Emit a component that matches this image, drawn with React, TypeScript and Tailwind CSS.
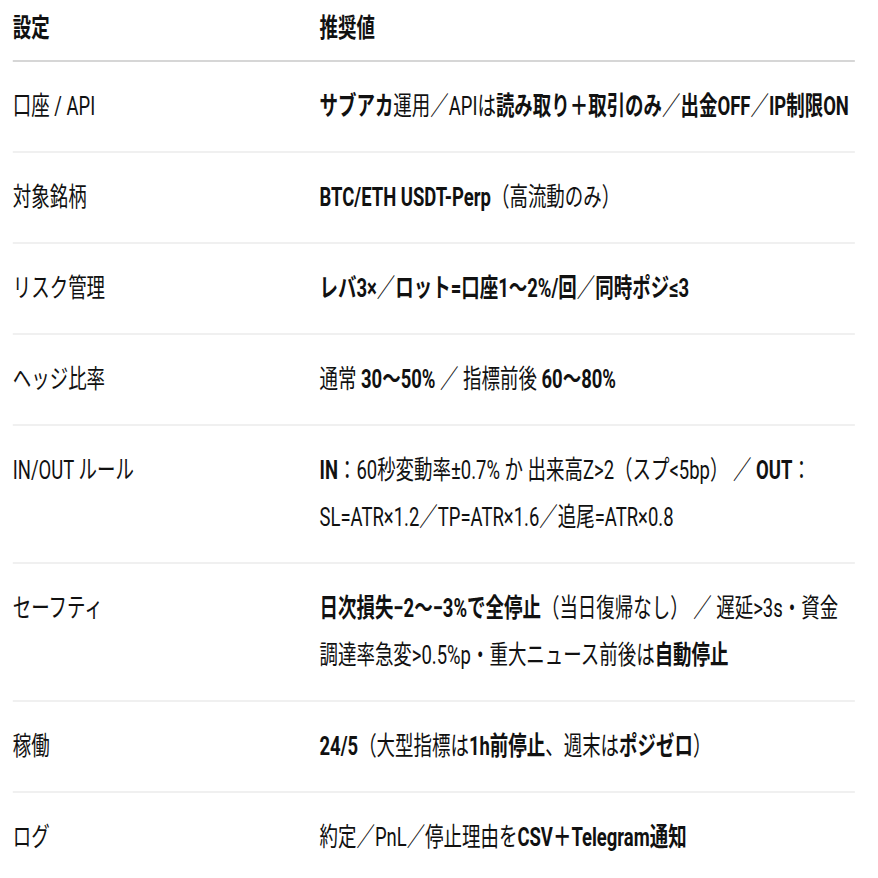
import type { ReactNode } from "react";

/**
 * 設定 / 推奨値 の表
 * 参照画像は横方向に圧縮されているので、表全体を scale-x で縮める
 */

type Row = { label: string; value: ReactNode };

const B = ({ children }: { children: ReactNode }) => (
  <span className="font-bold">{children}</span>
);

const rows: Row[] = [
  {
    label: "口座 / API",
    value: (
      <>
        <B>サブアカ</B>運用／APIは<B>読み取り＋取引のみ</B>／<B>出金OFF</B>／<B>IP制限ON</B>
      </>
    ),
  },
  {
    label: "対象銘柄",
    value: (
      <>
        <B>BTC/ETH USDT-Perp</B>（高流動のみ）
      </>
    ),
  },
  {
    label: "リスク管理",
    value: (
      <>
        <B>レバ3×</B>／<B>ロット=口座1〜2%/回</B>／<B>同時ポジ≤3</B>
      </>
    ),
  },
  {
    label: "ヘッジ比率",
    value: (
      <>
        通常 <B>30〜50%</B> ／ 指標前後 <B>60〜80%</B>
      </>
    ),
  },
  {
    label: "IN/OUT ルール",
    value: (
      <>
        <B>IN</B>：60秒変動率±0.7% か 出来高Z&gt;2（スプ&lt;5bp） ／ <B>OUT</B>：SL=ATR×1.2／TP=ATR×1.6／追尾=ATR×0.8
      </>
    ),
  },
  {
    label: "セーフティ",
    value: (
      <>
        <B>日次損失−2〜−3%で全停止</B>（当日復帰なし） ／ 遅延&gt;3s・資金調達率急変&gt;0.5%p・重大ニュース前後は<B>自動停止</B>
      </>
    ),
  },
  {
    label: "稼働",
    value: (
      <>
        <B>24/5</B>（大型指標は<B>1h前停止</B>、週末は<B>ポジゼロ</B>）
      </>
    ),
  },
  {
    label: "ログ",
    value: (
      <>
        約定／PnL／停止理由を<B>CSV＋Telegram通知</B>
      </>
    ),
  },
];

export default function App() {
  return (
    <div className="w-[878px] h-[878px] overflow-hidden bg-white">
      <div
        className="w-[1236px] origin-top-left scale-x-[0.71] pl-[18px] pr-[32px] text-[26px] leading-[47px] text-[#111]"
        style={{ fontFamily: 'Roboto, "Noto Sans CJK JP", sans-serif' }}
      >
        {/* ヘッダー */}
        <div className="flex border-b-2 border-[#d6d6d6] pt-[5px] pb-[8px] font-bold">
          <div className="w-[432px] shrink-0">設定</div>
          <div className="flex-1">推奨値</div>
        </div>

        {/* 各行 */}
        {rows.map((row, i) => (
          <div
            key={row.label}
            className={
              i === rows.length - 1
                ? "flex py-[21px]"
                : "flex py-[21px] border-b-2 border-[#f0f0f0]"
            }
          >
            <div className="w-[432px] shrink-0">{row.label}</div>
            <div className="flex-1">{row.value}</div>
          </div>
        ))}
      </div>
    </div>
  );
}
